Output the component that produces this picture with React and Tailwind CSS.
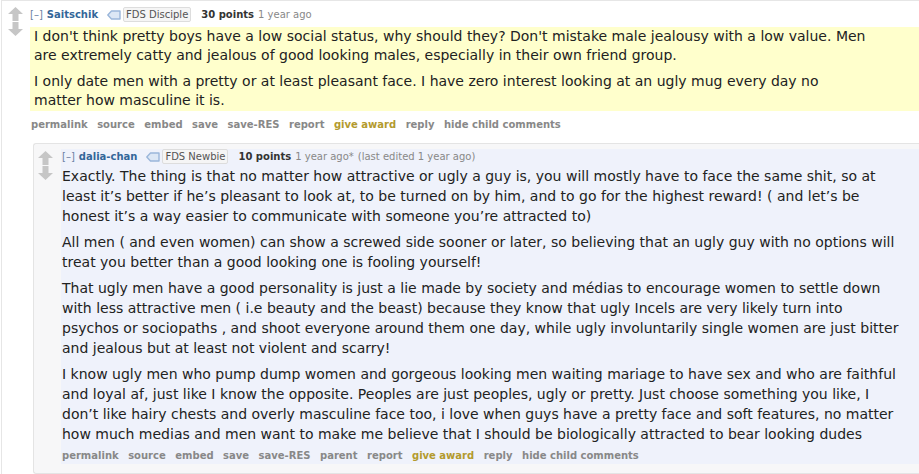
import React from "react";

const verdana = { fontFamily: '"DejaVu Sans", Verdana, sans-serif' };

function Arrows() {
  return (
    <div className="flex w-[15px] shrink-0 flex-col items-center gap-[1px]">
      <svg width="15" height="14" viewBox="0 0 15 14">
        <path d="M7.5 0 L15 7 L10.5 7 L10.5 14 L4.5 14 L4.5 7 L0 7 Z" fill="#c6c6c6" />
      </svg>
      <svg width="15" height="14" viewBox="0 0 15 14">
        <path d="M7.5 14 L15 7 L10.5 7 L10.5 0 L4.5 0 L4.5 7 L0 7 Z" fill="#c6c6c6" />
      </svg>
    </div>
  );
}

function TagIcon() {
  return (
    <svg width="14" height="10" viewBox="0 0 14 10" className="mr-[2px]">
      <path
        d="M4.5 1 H13 V9 H4.5 L0.8 5 Z"
        fill="#dce7f5"
        stroke="#9ab6da"
        strokeWidth="1.4"
        strokeLinejoin="round"
      />
    </svg>
  );
}

function Tagline({ user, flair, points, time, edited }) {
  return (
    <p className="flex items-center text-[10px] leading-[14px] text-[#888]">
      <span className="text-[#6b7fa3]">[–]</span>
      <span className="ml-[4px] font-bold text-[#369]">{user}</span>
      <span className="ml-[9px] flex items-center">
        <TagIcon />
        <span className="rounded-[2px] border border-[#ddd] bg-[#f5f5f5] px-[2px] leading-[13px] text-[#545454]">
          {flair}
        </span>
      </span>
      <span className="ml-[10px] font-bold text-[#333]">{points}</span>
      <span className="ml-[4px]">{time}</span>
      {edited && <span className="ml-[4px]">{edited}</span>}
    </p>
  );
}

function Actions({ items }) {
  return (
    <ul className="flex items-center text-[10px] font-bold leading-[14px] text-[#888]">
      {items.map((item) => (
        <li
          key={item}
          className={"pr-[9.5px] " + (item === "give award" ? "text-[#b39a2e]" : "")}
        >
          {item}
        </li>
      ))}
    </ul>
  );
}

export default function App() {
  return (
    <div className="min-h-screen overflow-hidden bg-white pl-[1px]" style={verdana}>
      <div className="min-h-screen border-t border-l border-[#e6e6e6] pl-[6px]">
        {/* parent comment */}
        <div className="flex pt-[6px]">
          <Arrows />
          <div className="ml-[7px] flex-1">
            <Tagline user="Saitschik" flair="FDS Disciple" points="30 points" time="1 year ago" />
            <div className="mt-[5px] bg-[#ffffcc] px-[4px] pt-[0px] pb-[1px] text-[14px] leading-[19px] text-[#222]">
              <div className="max-w-[840px] space-y-[7px]">
                <p>
                  I don't think pretty boys have a low social status, why should they? Don't mistake male jealousy with a low value. Men are extremely catty and jealous of good looking males, especially in their own friend group.
                </p>
                <p>
                  I only date men with a pretty or at least pleasant face. I have zero interest looking at an ugly mug every day no
                  <br />
                  matter how masculine it is.
                </p>
              </div>
            </div>
            <div className="ml-[1px] mt-[7px]">
              <Actions
                items={["permalink", "source", "embed", "save", "save-RES", "report", "give award", "reply", "hide child comments"]}
              />
            </div>

            {/* child comment */}
            <div className="ml-[3px] mt-[11px] flex rounded-tl-[3px] rounded-bl-[3px] border-t border-l border-b border-[#e4e4e4] bg-[#f7f7f8] pl-[4px] pt-[5px] pb-[9px]">
              <div className="pt-[2px]">
                <Arrows />
              </div>
              <div className="ml-[8px] flex-1 bg-[#eff2fb] pl-[1px] pt-[0px] pb-[1px]">
                <Tagline
                  user="dalia-chan"
                  flair="FDS Newbie"
                  points="10 points"
                  time="1 year ago*"
                  edited="(last edited 1 year ago)"
                />
                <div className="mt-[2px] text-[14px] leading-[20px] text-[#222]">
                  <div className="max-w-[840px] space-y-[6px]">
                    <p>
                      Exactly. The thing is that no matter how attractive or ugly a guy is, you will mostly have to face the same shit, so at least it’s better if he’s pleasant to look at, to be turned on by him, and to go for the highest reward! ( and let’s be honest it’s a way easier to communicate with someone you’re attracted to)
                    </p>
                    <p>
                      All men ( and even women) can show a screwed side sooner or later, so believing that an ugly guy with no options will treat you better than a good looking one is fooling yourself!
                    </p>
                    <p>
                      That ugly men have a good personality is just a lie made by society and médias to encourage women to settle down with less attractive men ( i.e beauty and the beast) because they know that ugly Incels are very likely turn into psychos or sociopaths , and shoot everyone around them one day, while ugly involuntarily single women are just bitter and jealous but at least not violent and scarry!
                    </p>
                    <p>
                      I know ugly men who pump dump women and gorgeous looking men waiting mariage to have sex and who are faithful and loyal af, just like I know the opposite. Peoples are just peoples, ugly or pretty. Just choose something you like, I don’t like hairy chests and overly masculine face too, i love when guys have a pretty face and soft features, no matter how much medias and men want to make me believe that I should be biologically attracted to bear looking dudes
                    </p>
                  </div>
                </div>
                <div className="mt-[5px]">
                  <Actions
                    items={["permalink", "source", "embed", "save", "save-RES", "parent", "report", "give award", "reply", "hide child comments"]}
                  />
                </div>
              </div>
            </div>
          </div>
        </div>
      </div>
    </div>
  );
}
